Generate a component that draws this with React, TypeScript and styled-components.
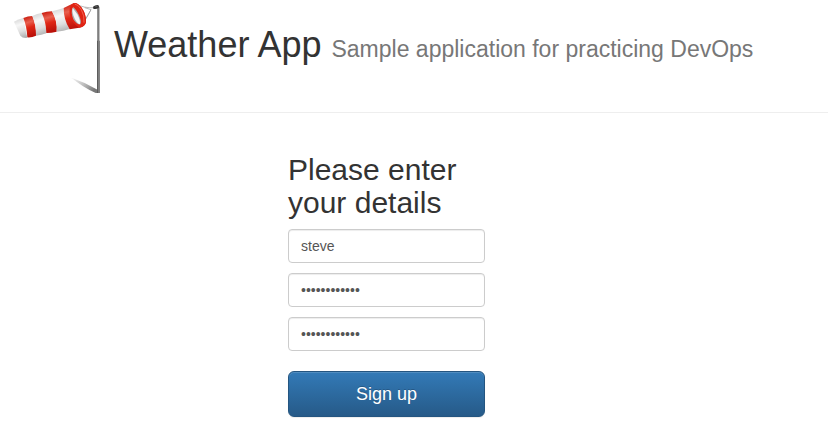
import React from "react";
import styled, { createGlobalStyle } from "styled-components";

const GlobalStyle = createGlobalStyle`
  *, *::before, *::after { box-sizing: border-box; }
  body {
    margin: 0;
    background: #fff;
    color: #333;
    font-family: "Liberation Sans", Arial, sans-serif;
    font-size: 14px;
    line-height: 20px;
  }
`;

const PageHeader = styled.header`
  display: flex;
  align-items: flex-start;
  gap: 10px;
  padding-bottom: 16px;
  border-bottom: 1px solid #eee;
`;

const Logo = styled.svg`
  flex: none;
  width: 104px;
  height: 96px;
`;

const Title = styled.h1`
  margin: 25px 0 0;
  font-size: 36px;
  font-weight: 500;
  line-height: 40px;
`;

const Tagline = styled.small`
  color: #777;
  font-size: 23px;
  font-weight: 400;
  line-height: 24px;
`;

const Main = styled.main`
  display: grid;
  grid-template-columns: repeat(3, 1fr);
  padding: 40px 101px 16px 46px;
`;

const SignUpForm = styled.form`
  grid-column: 2;
  display: flex;
  flex-direction: column;
  gap: 10px;
  padding: 0 15px;
`;

const FormTitle = styled.h2`
  margin: 0;
  font-size: 30px;
  font-weight: 500;
  line-height: 33px;
`;

const Field = styled.input`
  width: 100%;
  height: 34px;
  padding: 6px 12px;
  border: 1px solid #ccc;
  border-radius: 4px;
  background: #fff;
  box-shadow: inset 0 1px 1px rgba(0, 0, 0, 0.075);
  color: #555;
  font: inherit;
  &:focus {
    border-color: #66afe9;
    outline: 0;
  }
`;

const SubmitButton = styled.button`
  height: 46px;
  margin-top: 10px;
  padding: 10px 16px;
  border: 1px solid #245580;
  border-radius: 6px;
  background: linear-gradient(to bottom, #337ab7 0%, #265a88 100%);
  box-shadow: inset 0 1px 0 rgba(255, 255, 255, 0.15), 0 1px 1px rgba(0, 0, 0, 0.075);
  color: #fff;
  font-family: inherit;
  font-size: 18px;
  line-height: 24px;
  text-shadow: 0 -1px 0 rgba(0, 0, 0, 0.2);
  cursor: pointer;
`;

function Windsock() {
  return (
    <Logo viewBox="0 0 312 288" role="img" aria-label="Windsock">
      <defs>
        <linearGradient id="red" x1="0.3" y1="0" x2="0.5" y2="1">
          <stop offset="0" stopColor="#c9190c" />
          <stop offset="0.3" stopColor="#e8604f" />
          <stop offset="0.55" stopColor="#df2716" />
          <stop offset="1" stopColor="#b80f08" />
        </linearGradient>
        <linearGradient id="cloth" x1="0.3" y1="0" x2="0.5" y2="1">
          <stop offset="0" stopColor="#d4d4d4" />
          <stop offset="0.35" stopColor="#f7f7f7" />
          <stop offset="0.7" stopColor="#dedede" />
          <stop offset="1" stopColor="#b4b4b4" />
        </linearGradient>
        <linearGradient id="pole" x1="0" y1="0" x2="1" y2="0">
          <stop offset="0" stopColor="#444" />
          <stop offset="0.5" stopColor="#888" />
          <stop offset="1" stopColor="#3c3c3c" />
        </linearGradient>
        <linearGradient id="shade" x1="0" y1="0" x2="1" y2="0.5">
          <stop offset="0" stopColor="#999" stopOpacity="0.1" />
          <stop offset="0.5" stopColor="#888" stopOpacity="0.5" />
          <stop offset="1" stopColor="#555" stopOpacity="0.8" />
        </linearGradient>
        <filter id="soft" x="-10%" y="-20%" width="120%" height="140%">
          <feGaussianBlur stdDeviation="2" />
        </filter>
      </defs>
      <path d="M214 233 Q254 246 294 270 L294 279 L287 279 Q248 261 214 233 Z" fill="url(#shade)" filter="url(#soft)" />
      <path d="M228 12 Q252 25 283 23 M245 78 L273 29 L254 23 M258 56 L273 29" fill="none" stroke="#999" strokeWidth="2" />
      <path d="M42 65 Q55 57 70 54 L82 113 Q69 116 61 107 Z" fill="url(#cloth)" />
      <path d="M70 54 Q84 48 97 48 Q110 78 108 107 Q96 113 82 112 Q80 78 70 54 Z" fill="url(#red)" />
      <path d="M97 48 Q112 41 125 39 Q139 68 139 100 Q125 105 108 107 Q108 73 97 48 Z" fill="url(#cloth)" />
      <path d="M125 39 Q140 34 156 34 Q173 65 170 95 Q155 99 139 99 Q138 64 125 39 Z" fill="url(#red)" />
      <path d="M156 34 Q174 29 191 24 Q192 58 209 87 Q191 93 170 95 Q173 60 156 34 Z" fill="url(#cloth)" />
      <path d="M191 24 L222 9 Q232 8 244 22 Q259 42 258 66 Q256 80 238 83 L209 88 Q191 60 191 24 Z" fill="url(#red)" />
      <path d="M214 14 L222 9 Q233 8 244 22 Q259 42 258 66 Q255 80 238 83 Q214 70 209 42 Q207 24 214 14 Z" fill="#e02414" />
      <path d="M219 21 Q211 36 220 58 Q230 75 241 73 Q246 66 237 46 Q228 26 219 21 Z" fill="#aaa" />
      <path d="M218 24 Q215 39 225 58 Q233 73 240 72 Q241 60 232 43 Z" fill="#f5f5f5" />
      <path d="M224 12 Q234 13 244 29 Q254 47 252 68" fill="none" stroke="#f0614e" strokeWidth="3" />
      <path d="M292 20 H298 V123 H292 Z M291 122 H299 V279 H291 Z" fill="url(#pole)" />
      <path d="M279 20 Q286 14 294 15 Q299 17 296 24 Q288 28 280 26 Z" fill="#343434" />
      <path d="M286 20 L293 18" fill="none" stroke="#777" strokeWidth="2" />
    </Logo>
  );
}

export default function App() {
  return (
    <>
      <GlobalStyle />
      <PageHeader>
        <Windsock />
        <Title>
          Weather App <Tagline>Sample application for practicing DevOps</Tagline>
        </Title>
      </PageHeader>
      <Main>
        <SignUpForm onSubmit={(event: React.FormEvent) => event.preventDefault()}>
          <FormTitle>Please enter your details</FormTitle>
          <Field type="text" aria-label="Username" defaultValue="steve" autoComplete="username" />
          <Field type="password" aria-label="Password" defaultValue="weatherapp12" autoComplete="new-password" />
          <Field type="password" aria-label="Confirm password" defaultValue="weatherapp12" autoComplete="new-password" />
          <SubmitButton type="submit">Sign up</SubmitButton>
        </SignUpForm>
      </Main>
    </>
  );
}
